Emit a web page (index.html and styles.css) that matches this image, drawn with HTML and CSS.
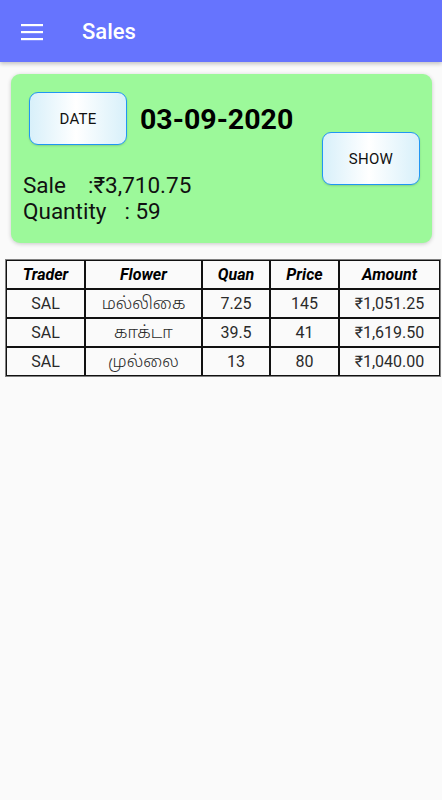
FILE: index.html
```html
<!DOCTYPE html>
<html>
<head>
<meta charset="utf-8">
<link rel="stylesheet" href="styles.css">
</head>
<body>
<header class="appbar">
  <svg class="menu" width="22" height="18" viewBox="0 0 22 18"><rect x="0" y="1" width="22" height="2.2" fill="#fff"/><rect x="0" y="8" width="22" height="2.2" fill="#fff"/><rect x="0" y="15" width="22" height="2.2" fill="#fff"/></svg>
  <span class="title">Sales</span>
</header>
<main class="content">
  <section class="card">
    <div class="card-left">
      <div class="date-row">
        <button class="btn">DATE</button>
        <span class="date">03-09-2020</span>
      </div>
      <div class="stats">
        <div class="stat"><span class="lbl-sale">Sale</span><span>:₹3,710.75</span></div>
        <div class="stat"><span class="lbl-qty">Quantity</span><span>: 59</span></div>
      </div>
    </div>
    <button class="btn show">SHOW</button>
  </section>
  <table class="sales">
    <thead>
      <tr><th class="c1">Trader</th><th class="c2">Flower</th><th class="c3">Quan</th><th class="c4">Price</th><th class="c5">Amount</th></tr>
    </thead>
    <tbody>
      <tr><td>SAL</td><td><span class="ta">மல்லிகை</span></td><td>7.25</td><td>145</td><td>₹1,051.25</td></tr>
      <tr><td>SAL</td><td><span class="ta">காக்டா</span></td><td>39.5</td><td>41</td><td>₹1,619.50</td></tr>
      <tr><td>SAL</td><td><span class="ta">முல்லை</span></td><td>13</td><td>80</td><td>₹1,040.00</td></tr>
    </tbody>
  </table>
</main>
</body>
</html>
```
FILE: styles.css
```css
html, body {
  margin: 0;
  padding: 0;
}
body {
  background: #fafafa;
  font-family: Roboto, "Noto Sans", sans-serif;
  color: #000;
  width: 442px;
  height: 800px;
  overflow: hidden;
}
.appbar {
  height: 62px;
  background: #6674fe;
  display: flex;
  align-items: center;
  box-shadow: 0 2px 4px rgba(0,0,0,0.22);
  position: relative;
}
.menu {
  margin-left: 21px;
  margin-top: 1px;
}
.title {
  color: #fff;
  font-size: 22px;
  font-weight: 500;
  margin-left: 39px;
  margin-top: 1px;
}
.content {
  padding-top: 12px;
}
.card {
  margin: 0 10px 0 11px;
  height: 169px;
  box-sizing: border-box;
  background: #9cf99a;
  border-radius: 9px;
  box-shadow: 0 1px 4px rgba(0,0,0,0.2);
  display: flex;
  justify-content: space-between;
  padding: 18px 12px 0 12px;
}
.date-row {
  display: flex;
  align-items: center;
  margin-left: 6px;
}
.btn {
  width: 98px;
  height: 53px;
  box-sizing: border-box;
  border: 1.5px solid #2196f3;
  border-radius: 9px;
  background: linear-gradient(90deg, #d8f0fa 0%, #ffffff 48%, #d8f0fa 100%);
  font-family: Roboto, sans-serif;
  font-size: 15px;
  color: #111;
  letter-spacing: 0.3px;
  padding: 0;
  box-shadow: 0 1px 2px rgba(0,0,0,0.15);
}
.show {
  margin-top: 40px;
}
.date {
  font-size: 28.5px;
  font-weight: 700;
  margin-left: 13px;
  margin-top: 1px;
}
.stats {
  margin-top: 27px;
  font-size: 22.5px;
  line-height: 26px;
  color: #111;
}
.lbl-sale {
  display: inline-block;
  margin-right: 22px;
}
.lbl-qty {
  display: inline-block;
  margin-right: 18px;
}
.sales {
  margin: 16px 0 0 5px;
  width: 436px;
  border-collapse: separate;
  border-spacing: 0;
  border: 1px solid #808080;
  font-size: 16px;
  text-align: center;
}
.sales th, .sales td {
  border: 1px solid #111;
  padding: 0;
  height: 27px;
}
.sales th {
  font-weight: 700;
  font-style: italic;
  color: #000;
}
.sales td {
  color: #2a2a2a;
}
.ta {
  font-family: "Noto Sans Tamil", "Noto Sans Tamil UI", "Lohit Tamil", "Noto Serif Tamil", sans-serif;
  font-size: 17px;
  font-weight: 300;
  line-height: 16px;
}
.c1 { width: 77px; }
.c2 { width: 115px; }
.c3 { width: 66px; }
.c4 { width: 67px; }
```
